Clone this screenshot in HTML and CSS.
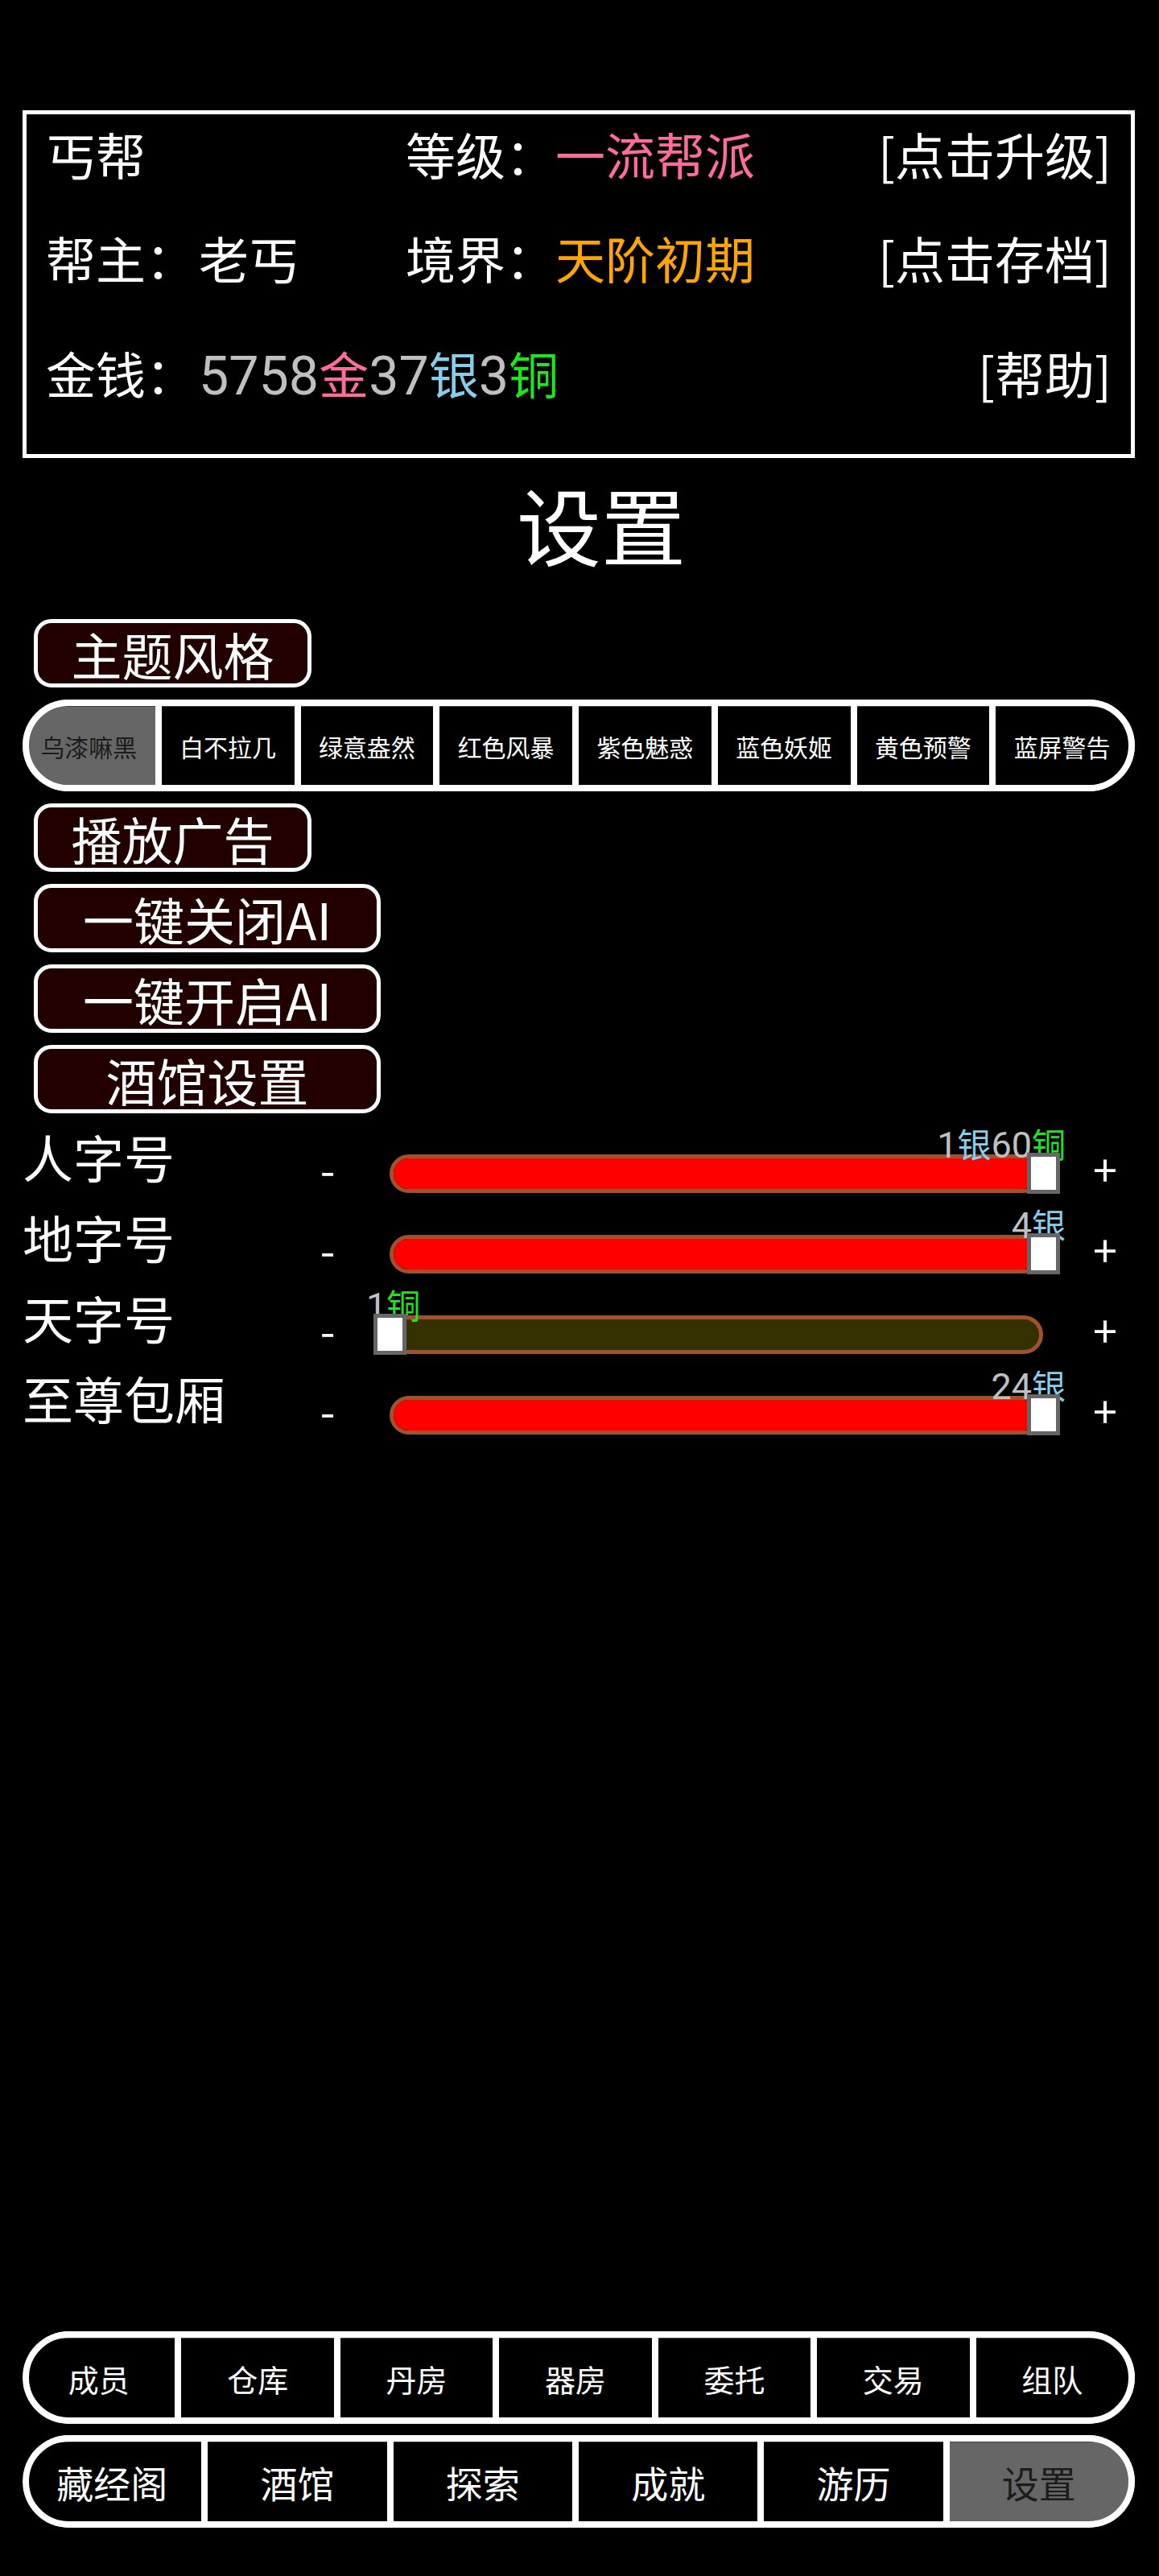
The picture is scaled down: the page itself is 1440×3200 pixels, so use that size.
FILE: index.html
```html
<!DOCTYPE html>
<html lang="zh-CN">
<head>
<meta charset="utf-8">
<title>设置</title>
<link rel="stylesheet" href="styles.css">
</head>
<body>
<div class="page">
  <section class="info">
    <div class="info-grid">
      <div class="cell">丐帮</div>
      <div class="cell">等级：<span class="pink">一流帮派</span></div>
      <div class="cell right">[点击升级]</div>
      <div class="cell">帮主<span class="colon">：</span>老丐</div>
      <div class="cell">境界：<span class="orange">天阶初期</span></div>
      <div class="cell right">[点击存档]</div>
      <div class="cell span2 last">金钱<span class="colon">：</span><span class="silver num">5758</span><span class="pink">金</span><span class="silver num">37</span><span class="sky">银</span><span class="silver num">3</span><span class="green">铜</span></div>
      <div class="cell right last">[帮助]</div>
    </div>
  </section>

  <h1 class="title">设置</h1>

  <div class="controls">
    <div class="btn btn-s">主题风格</div>
    <div class="seg seg-theme">
      <div class="seg-cell on">乌漆嘛黑</div>
      <div class="seg-cell">白不拉几</div>
      <div class="seg-cell">绿意盎然</div>
      <div class="seg-cell">红色风暴</div>
      <div class="seg-cell">紫色魅惑</div>
      <div class="seg-cell">蓝色妖姬</div>
      <div class="seg-cell">黄色预警</div>
      <div class="seg-cell">蓝屏警告</div>
    </div>
    <div class="btn btn-s">播放广告</div>
    <div class="btn btn-l">一键关闭AI</div>
    <div class="btn btn-l">一键开启AI</div>
    <div class="btn btn-l">酒馆设置</div>
  </div>

  <div class="sliders">
    <div class="srow">
      <div class="slabel">人字号</div>
      <div class="pm">-</div>
      <div class="twrap" style="--p:100">
        <div class="track"><div class="fill"></div></div>
        <div class="vals"><span class="val"><span class="silver num">1</span><span class="sky">银</span><span class="silver num">60</span><span class="green">铜</span></span></div>
        <div class="thumb"></div>
      </div>
      <div class="pm">+</div>
    </div>
    <div class="srow">
      <div class="slabel">地字号</div>
      <div class="pm">-</div>
      <div class="twrap" style="--p:100">
        <div class="track"><div class="fill"></div></div>
        <div class="vals"><span class="val"><span class="silver num">4</span><span class="sky">银</span></span></div>
        <div class="thumb"></div>
      </div>
      <div class="pm">+</div>
    </div>
    <div class="srow">
      <div class="slabel">天字号</div>
      <div class="pm">-</div>
      <div class="twrap" style="--p:0">
        <div class="track"><div class="fill"></div></div>
        <div class="vals"><span class="val"><span class="silver num">1</span><span class="green">铜</span></span></div>
        <div class="thumb"></div>
      </div>
      <div class="pm">+</div>
    </div>
    <div class="srow">
      <div class="slabel">至尊包厢</div>
      <div class="pm">-</div>
      <div class="twrap" style="--p:100">
        <div class="track"><div class="fill"></div></div>
        <div class="vals"><span class="val"><span class="silver num">24</span><span class="sky">银</span></span></div>
        <div class="thumb"></div>
      </div>
      <div class="pm">+</div>
    </div>
  </div>

  <nav class="navs">
    <div class="seg seg-nav1">
      <div class="seg-cell">成员</div>
      <div class="seg-cell">仓库</div>
      <div class="seg-cell">丹房</div>
      <div class="seg-cell">器房</div>
      <div class="seg-cell">委托</div>
      <div class="seg-cell">交易</div>
      <div class="seg-cell">组队</div>
    </div>
    <div class="seg seg-nav2">
      <div class="seg-cell">藏经阁</div>
      <div class="seg-cell">酒馆</div>
      <div class="seg-cell">探索</div>
      <div class="seg-cell">成就</div>
      <div class="seg-cell">游历</div>
      <div class="seg-cell on">设置</div>
    </div>
  </nav>
</div>
</body>
</html>
```

FILE: styles.css
```css
* { box-sizing: border-box; }

html, body {
  margin: 0;
  padding: 0;
  background: #000;
}

body {
  font-family: "Noto Sans CJK SC", "Noto Sans", sans-serif;
  color: #fff;
}

.page {
  min-height: 3200px;
  display: flex;
  flex-direction: column;
  padding-top: 137px;
}

.num {
  font-family: Roboto, "Noto Sans CJK SC", sans-serif;
  font-size: 1.07em;
  line-height: 1;
}

.colon { margin-right: 4px; }

/* ---------- info box ---------- */
.info {
  margin-left: 28px;
  width: 1382px;
  height: 432px;
  border: 5px solid #fff;
  padding: 4px 24px 0 24px;
}

.info-grid {
  display: grid;
  grid-template-columns: 447px 1fr auto;
  grid-template-rows: 90px 90px 90px;
  row-gap: 39px;
  font-size: 62px;
  line-height: 90px;
  white-space: nowrap;
}

.cell { height: 90px; }
.cell.right { text-align: right; }
.cell.span2 { grid-column: 1 / span 2; }
.cell.last { margin-top: 14px; }

.pink { color: #ff6b9d; }
.orange { color: #ffa500; }
.silver { color: #c0c0c0; }
.sky { color: #87ceeb; }
.green { color: #1ee61e; }

/* ---------- title ---------- */
.title {
  margin: 7px 0 46px 0;
  padding-left: 54px;
  font-size: 105px;
  line-height: 147px;
  font-weight: 400;
  text-align: center;
}

/* ---------- buttons & segmented bars ---------- */
.controls {
  margin-left: 28px;
  width: 1382px;
  display: flex;
  flex-direction: column;
  align-items: flex-start;
  gap: 15px;
}

.btn {
  margin-left: 14px;
  height: 85px;
  border: 5px solid #fff;
  border-radius: 22px;
  background: #230000;
  display: flex;
  align-items: center;
  justify-content: center;
  font-size: 63px;
  line-height: 1;
  white-space: nowrap;
}

.btn-s { width: 345px; }
.btn-l { width: 431px; }

.seg {
  position: relative;
  width: 1382px;
  border-radius: 58px;
  overflow: hidden;
  background: #fff;
  padding: 8px 8px 8px 0;
  display: flex;
  gap: 8px;
}

.seg::after {
  content: "";
  position: absolute;
  inset: 0;
  border: 8px solid #fff;
  border-radius: 58px;
  pointer-events: none;
}

.seg-cell {
  flex: 1 1 0;
  background: #000;
  display: flex;
  align-items: center;
  justify-content: center;
  white-space: nowrap;
  color: #fff;
  border-top: 1px solid #444;
}

.seg-cell.on {
  background: #666;
  color: #1c1c1c;
}

.seg-theme { height: 114px; font-size: 30px; }
.seg-nav1 { height: 115px; font-size: 38px; }
.seg-nav2 { height: 115px; font-size: 46px; }

/* ---------- sliders ---------- */
.sliders {
  margin-left: 28px;
  width: 1382px;
  display: flex;
  flex-direction: column;
}

.srow {
  height: 100px;
  display: grid;
  grid-template-columns: 342px 74px 892px 74px;
  align-items: end;
}

.slabel {
  align-self: start;
  padding-top: 21px;
  font-size: 63px;
  line-height: 64px;
  white-space: nowrap;
}

.pm {
  height: 51px;
  padding-bottom: 14px;
  display: flex;
  align-items: center;
  justify-content: center;
  font-size: 54px;
  line-height: 1;
}

.twrap {
  position: relative;
  height: 51px;
  padding: 2px 40px 0 40px;
}

.track {
  height: 48px;
  border: 5px solid #a0522d;
  border-radius: 24px;
  background: #363100;
  overflow: hidden;
}

.fill {
  height: 100%;
  width: calc(var(--p) * 1%);
  background: #ff0000;
}

.vals {
  position: absolute;
  top: -33px;
  left: 11px;
  right: 12px;
  height: 42px;
}

.val {
  position: absolute;
  top: 0;
  left: calc(var(--p) * 1%);
  transform: translateX(calc(var(--p) * -1%));
  font-size: 42px;
  line-height: 42px;
  white-space: nowrap;
}

.thumb {
  position: absolute;
  top: 0;
  left: calc(40px + var(--p) * 8.12px - 20.5px);
  width: 41px;
  height: 51px;
  border: 5px solid #666;
  background: #fff;
}

/* ---------- bottom nav ---------- */
.navs {
  margin-top: auto;
  margin-left: 28px;
  display: flex;
  flex-direction: column;
  gap: 14px;
  padding-bottom: 60px;
}
```
